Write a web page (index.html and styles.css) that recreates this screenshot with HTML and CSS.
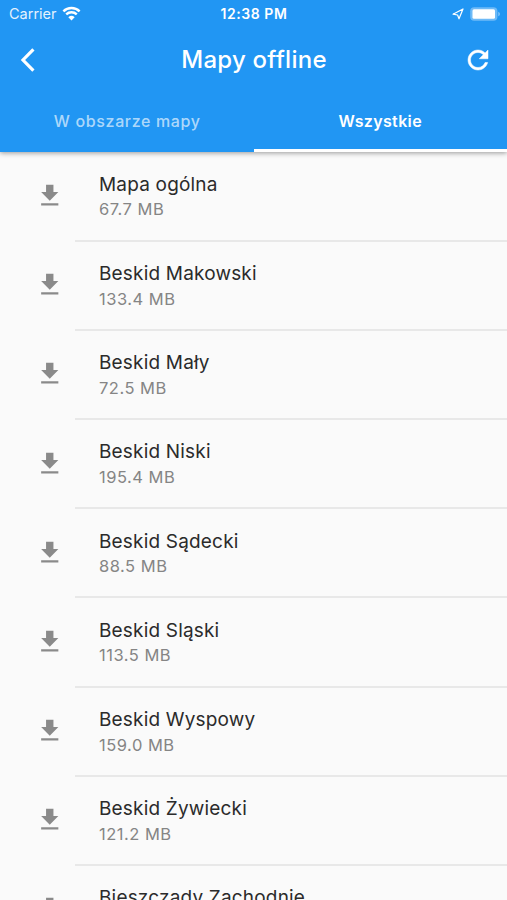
FILE: index.html
```
<!DOCTYPE html>
<html lang="pl">
<head>
    <meta charset="UTF-8">
    <meta name="viewport" content="width=device-width, initial-scale=1.0">
    <title>Mapy offline</title>
    <link rel="stylesheet" href="styles.css">
</head>
<body>
    <header class="app-bar">
        <div class="status-bar">
            <div class="status-left">
                <span class="carrier">Carrier</span>
                <svg class="wifi" viewBox="0 0 18 14">
                    <path d="M1.3 4.9a11 11 0 0 1 15.4 0M4 7.9a7.2 7.2 0 0 1 10 0" fill="none" stroke="#fff" stroke-width="2.3"/>
                    <path d="M9 13.6l-3-3.1a4.4 4.4 0 0 1 6 0z" fill="#fff"/>
                </svg>
            </div>
            <span class="clock">12:38 PM</span>
            <div class="status-right">
                <svg class="location" viewBox="0 0 12 12">
                    <path d="M1 6.2L11 1 7 10.8 5.6 7z" fill="none" stroke="#fff" stroke-width="1.2" stroke-linejoin="round"/>
                </svg>
                <svg class="battery" viewBox="0 0 31 14">
                    <rect x=".2" y=".2" width="27.2" height="13.6" rx="4" fill="#fff" fill-opacity=".35"/>
                    <rect x="2.5" y="2.3" width="22.5" height="9.4" rx="1.5" fill="#fff"/>
                    <path d="M28.2 4.7c2.4 1 2.4 3.6 0 4.6z" fill="#fff" fill-opacity=".4"/>
                </svg>
            </div>
        </div>
        <div class="toolbar">
            <svg class="back" viewBox="0 0 16 26">
                <path d="M13.4 2.4L3 13l10.4 10.6" fill="none" stroke="#fff" stroke-width="3.2"/>
            </svg>
            <h1>Mapy offline</h1>
            <svg class="refresh" viewBox="0 0 24 24">
                <path fill="#fff" stroke="#fff" stroke-width=".4" d="M17.65 6.35C16.2 4.9 14.21 4 12 4c-4.42 0-7.99 3.58-7.99 8s3.57 8 7.99 8c3.73 0 6.84-2.55 7.73-6h-2.08c-.82 2.33-3.04 4-5.65 4-3.31 0-6-2.69-6-6s2.69-6 6-6c1.66 0 3.14.69 4.22 1.78L13 11h7V4l-2.35 2.35z"/>
            </svg>
        </div>
        <nav class="tabs">
            <div class="tab"><span class="tab-area">W obszarze mapy</span></div>
            <div class="tab active"><span class="tab-all">Wszystkie</span></div>
        </nav>
    </header>
    <ul class="map-list"></ul>

    <script>
        const maps = [
            ['Mapa ogólna', '67.7 MB'],
            ['Beskid Makowski', '133.4 MB'],
            ['Beskid Mały', '72.5 MB'],
            ['Beskid Niski', '195.4 MB'],
            ['Beskid Sądecki', '88.5 MB'],
            ['Beskid Sląski', '113.5 MB'],
            ['Beskid Wyspowy', '159.0 MB'],
            ['Beskid Żywiecki', '121.2 MB'],
            ['Bieszczady Zachodnie', '']
        ];

        document.querySelector('.map-list').innerHTML = maps.map(([name, size]) => `
            <li class="map-item">
                <svg class="download" viewBox="0 0 24 24"><path d="M19 9h-4V3H9v6H5l7 7 7-7zM5 18v2h14v-2H5z"/></svg>
                <div class="map-txt">
                    <h2>${name}</h2>
                    <p>${size}</p>
                </div>
            </li>`).join('');
    </script>
</body>
</html>
```
FILE: styles.css
```
*{margin: 0; padding: 0; box-sizing: border-box;}
html,body{height: 100%; overflow: hidden;}
body{display: flex; flex-direction: column; background: #fafafa; font-family: Inter, "Liberation Sans", sans-serif;}
ul,li{list-style: none;}
svg{display: block; flex: none;}

.app-bar{position: relative; flex: none; height: 152.4px; background: #2196f3; color: #fff; box-shadow: 0 1px 5px rgba(0,0,0,.4);}

.status-bar{display: grid; grid-template-columns: 1fr auto 1fr; align-items: center; height: 27px; padding: 0 6px 0 9px;}
.status-left,.status-right{display: flex; align-items: center;}
.status-right{justify-content: flex-end;}
.carrier{font-size: 14.5px; opacity: .88;}
.wifi{width: 19px; height: 15px; margin: -1px 0 0 5px;}
.clock{margin-right: 2px; font-size: 14px; font-weight: 600; letter-spacing: .55px;}
.location{width: 12px; height: 12px; margin-right: 6px;}
.battery{width: 31px; height: 14px;}

.toolbar{display: grid; grid-template-columns: 1fr auto 1fr; align-items: center; height: 66px; padding: 0 14px 0 20px;}
.back{width: 16px; height: 26px;}
.toolbar h1{margin-right: 5px; font-size: 24px; line-height: 30px; font-weight: 500; letter-spacing: .25px;}
.refresh{width: 30px; height: 30px; justify-self: end;}

.tabs{display: flex; height: 59.4px;}
.tab{display: flex; flex: 1; align-items: center; justify-content: center; border-bottom: 3px solid transparent; font-size: 16px; font-weight: 600; letter-spacing: .35px;}
.tab-area{padding-left: 1px; font-weight: 500; letter-spacing: .65px; color: rgba(255,255,255,.65);}
.active{border-bottom-color: #fff;}

.map-item{display: flex; position: relative; height: 89.2px;}
.map-item::after{content: ""; position: absolute; left: 75px; right: 0; bottom: 0; height: 2px; background: #e8e8e8;}
.download{width: 29.5px; height: 29.5px; margin: 28.6px 0 0 35px; fill: #8a8a8a;}
.map-txt{margin: 18.4px 0 0 34.5px;}
.map-txt h2{font-size: 19px; line-height: 28px; font-weight: 400; letter-spacing: .18px; color: #2b2b2b;}
.map-txt p{margin-top: -.4px; font-size: 16.5px; line-height: 22px; letter-spacing: .5px; color: #858585;}
```
